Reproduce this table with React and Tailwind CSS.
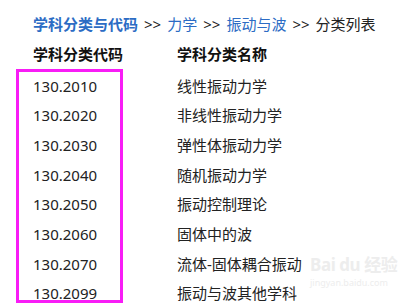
import React from 'react';

const ROWS = [
  ['130.2010', '线性振动力学'],
  ['130.2020', '非线性振动力学'],
  ['130.2030', '弹性体振动力学'],
  ['130.2040', '随机振动力学'],
  ['130.2050', '振动控制理论'],
  ['130.2060', '固体中的波'],
  ['130.2070', '流体-固体耦合振动'],
  ['130.2099', '振动与波其他学科'],
];

export default function App() {
  return (
    <div
      className="relative w-[407px] h-[306px] overflow-hidden bg-white text-[15px] text-[#222]"
      style={{ fontFamily: '"Noto Sans", "Noto Sans CJK SC", sans-serif' }}
    >
      {/* watermark, sits under the content */}
      <div className="absolute left-[310px] top-[256px] text-[#ededed] leading-none whitespace-nowrap pointer-events-none">
        <div className="text-[17px] font-bold tracking-tight">Bai du 经验</div>
        <div className="text-[9px] mt-[5px]">jingyan.baidu.com</div>
      </div>

      <div className="relative pl-[33px] pt-[9px]">
        {/* breadcrumb */}
        <div className="h-[30px] leading-[30px] flex items-center gap-[6px] whitespace-nowrap">
          <span className="font-bold text-[#2c6cc4]">学科分类与代码</span>
          <span>&gt;&gt;</span>
          <span className="text-[#2c6cc4]">力学</span>
          <span>&gt;&gt;</span>
          <span className="text-[#2c6cc4]">振动与波</span>
          <span>&gt;&gt;</span>
          <span>分类列表</span>
        </div>

        {/* header */}
        <div className="grid grid-cols-[144px_1fr] h-[30px] items-center font-bold text-[#111]">
          <span>学科分类代码</span>
          <span>学科分类名称</span>
        </div>

        {/* rows */}
        <div className="pt-[2px]">
          {ROWS.map(([code, name]) => (
            <div key={code} className="grid grid-cols-[144px_1fr] h-[29.7px] items-center">
              <span>{code}</span>
              <span>{name}</span>
            </div>
          ))}
        </div>
      </div>

      {/* highlight annotation */}
      <div className="absolute left-[16px] top-[69px] w-[107px] h-[234px] border-[3px] border-[#f81cf6] pointer-events-none" />
    </div>
  );
}
